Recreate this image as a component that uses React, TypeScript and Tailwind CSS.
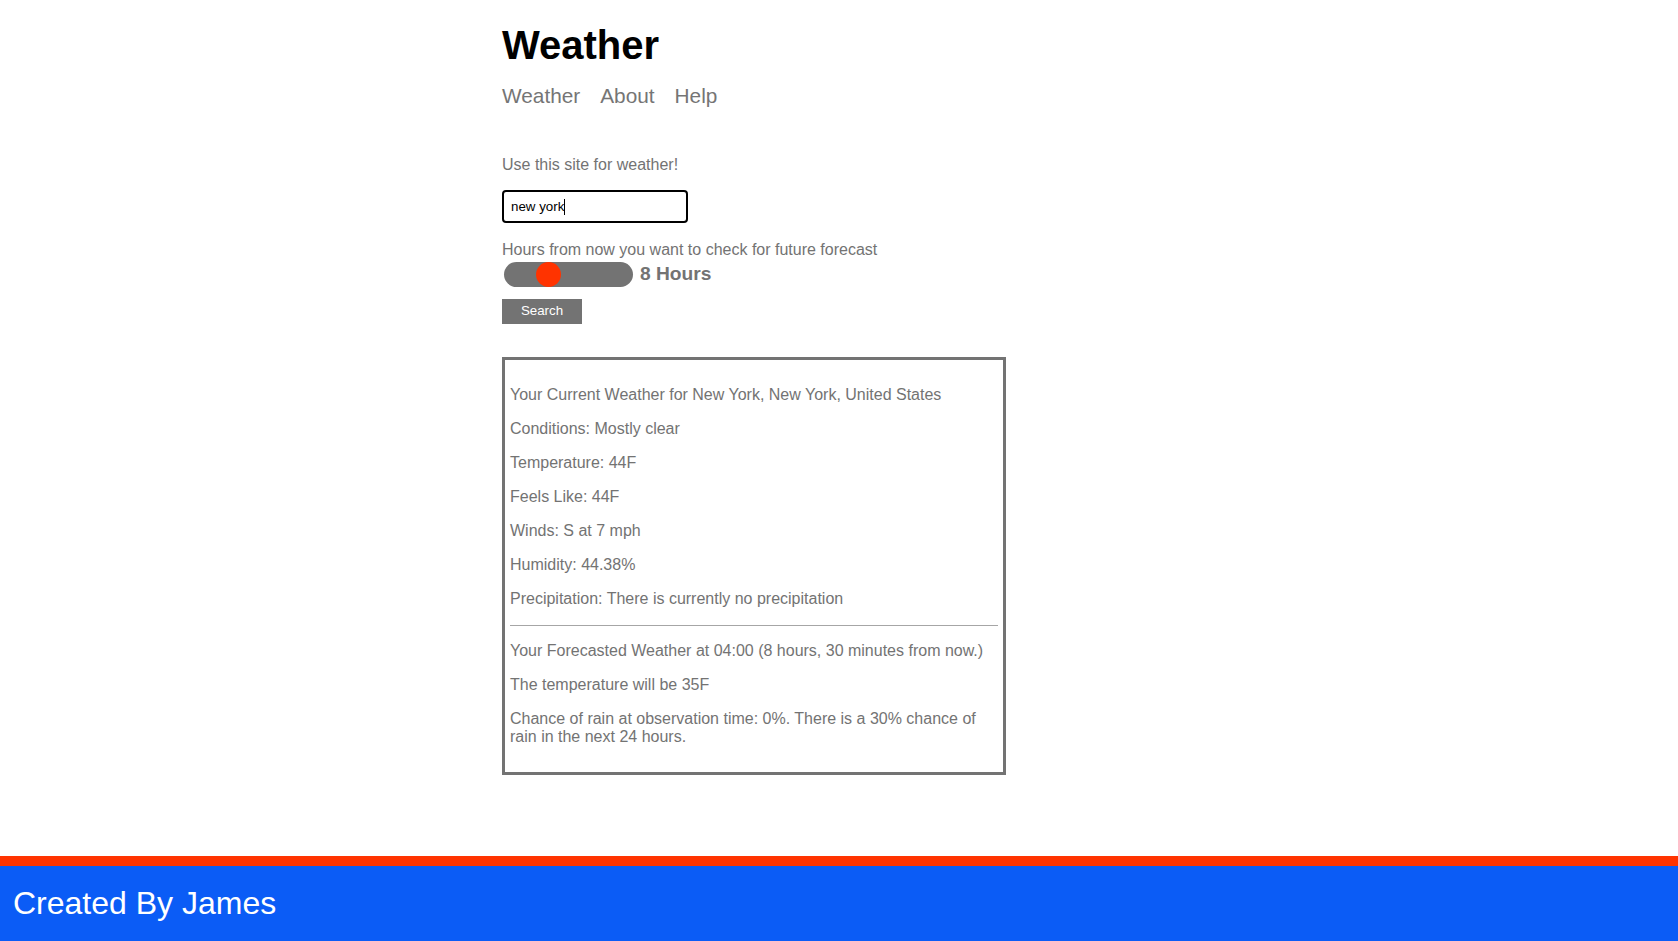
import React from "react";

export default function App() {
  const current = [
    "Your Current Weather for New York, New York, United States",
    "Conditions: Mostly clear",
    "Temperature: 44F",
    "Feels Like: 44F",
    "Winds: S at 7 mph",
    "Humidity: 44.38%",
    "Precipitation: There is currently no precipitation",
  ];
  return (
    <div className="min-h-screen flex flex-col bg-white font-['Liberation_Sans',Arial,sans-serif] text-[#737373]">
      <main className="flex-1">
        <div className="mx-auto w-[674px]">
          <header className="pt-[22px]">
            <h1 className="text-[40px] leading-[46px] font-bold text-black">Weather</h1>
            <nav className="mt-[16px] flex gap-[20px] text-[20.8px] leading-[23px] text-[#757575]">
              <a href="#">Weather</a>
              <a href="#">About</a>
              <a href="#">Help</a>
            </nav>
          </header>
          <p className="mt-[49px] text-[16px] leading-[18.4px]">Use this site for weather!</p>
          <div className="mt-[16px] w-[186px] h-[33px] border-2 border-black rounded-[4px] pl-[7px] flex items-center text-[13.33px] text-black">
            <span>new york</span>
            <span className="inline-block w-px h-[16px] bg-black" />
          </div>
          <p className="mt-[18px] text-[16px] leading-[18.4px]">Hours from now you want to check for future forecast</p>
          <div className="mt-[2px] flex items-center">
            <div className="ml-[2px] w-[129px] h-[25px] rounded-full bg-[#737373] flex items-center pl-[32px]">
              <div className="w-[25px] h-[25px] rounded-full bg-[#ff3300]" />
            </div>
            <span className="ml-[7px] text-[19.2px] leading-[22px] font-bold">8 Hours</span>
          </div>
          <button className="mt-[12px] block w-[80px] h-[25px] bg-[#737373] text-white text-[13.33px]">Search</button>
          <div className="mt-[33px] w-[504px] border-[3px] border-[#737373] pt-[9px] pl-[5px] pr-[5px] pb-[9px] text-[16px] leading-[17px]">
            {current.map((t) => (
              <p key={t} className="my-[17px]">{t}</p>
            ))}
            <hr className="mt-[18px] mb-0 border-0 border-t border-[#a6a6a6]" />
            <p className="mt-[16px] mb-[17px]">Your Forecasted Weather at 04:00 (8 hours, 30 minutes from now.)</p>
            <p className="my-[17px]">The temperature will be 35F</p>
            <p className="my-[17px] leading-[18px]">Chance of rain at observation time: 0%. There is a 30% chance of rain in the next 24 hours.</p>
          </div>
        </div>
      </main>
      <footer className="border-t-[10px] border-[#ff3300] bg-[#0b5cf6] h-[85px] flex items-center pl-[13px]">
        <span className="text-white text-[32px] leading-[37px]">Created By James</span>
      </footer>
    </div>
  );
}
